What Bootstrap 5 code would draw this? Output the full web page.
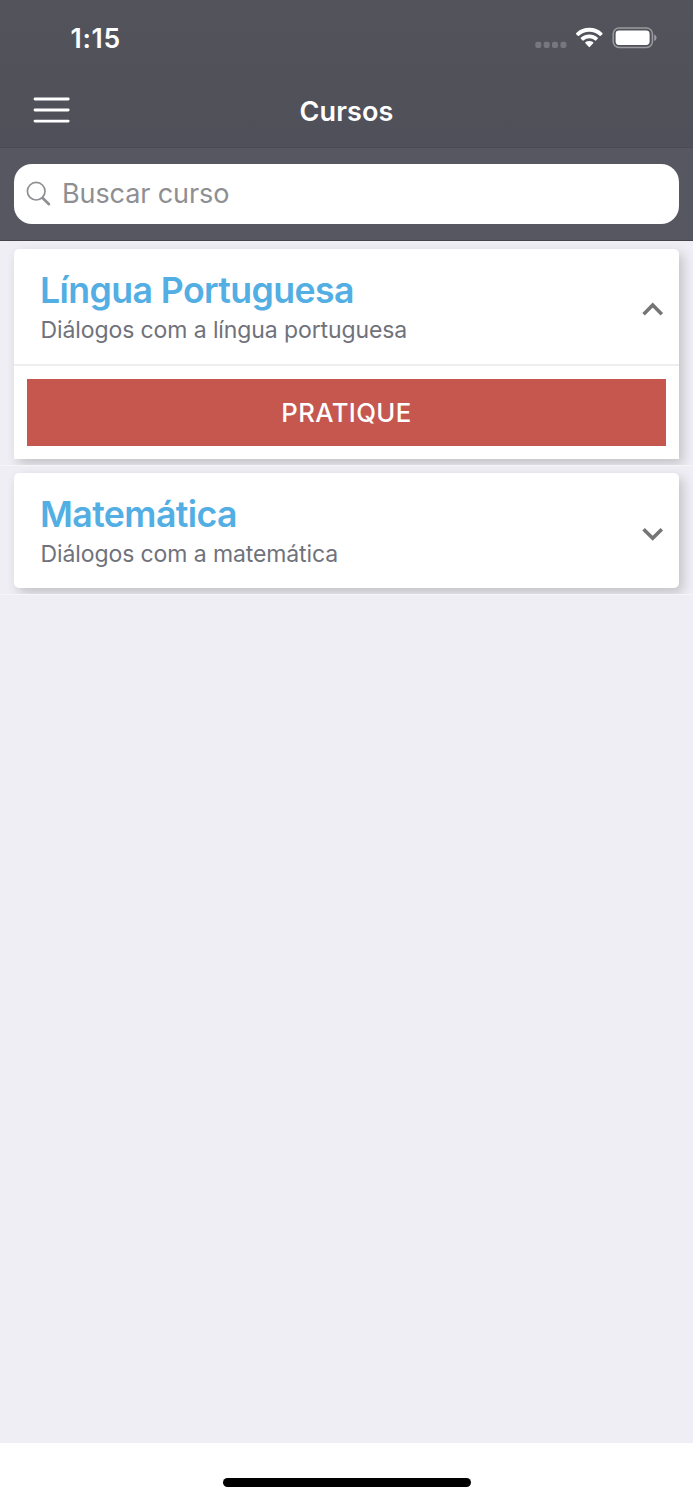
<!DOCTYPE html>
<html lang="pt-BR">
<head>
<meta charset="utf-8">
<meta name="viewport" content="width=device-width, initial-scale=1">
<title>Cursos</title>
<link href="https://cdn.jsdelivr.net/npm/bootstrap@5.3.0/dist/css/bootstrap.min.css" rel="stylesheet">
<style>
body{font-family:Inter,Roboto,"Liberation Sans",sans-serif;background:#efeef4;height:1500px;overflow:hidden}
svg{display:block;flex:none}
.topbar{height:148px;background:linear-gradient(#53535b,#50505a);border-bottom:1px solid #4b4a54;color:#fff}
.statusbar{height:76px;padding:0 36px 0 70.5px}
.clock{font-size:26.5px;font-weight:600;line-height:76px;letter-spacing:.7px}
.titlebar{height:68px;padding-left:33px}
.page-title{font-size:27px;font-weight:600;line-height:70px;letter-spacing:.1px;padding-top:3px}
.searchbar{height:93px;padding:16px 14px;background:#575762;border-bottom:1px solid #45434e}
.search-field{height:60px;border-radius:18px;padding-left:11px}
.search-field input{font-size:27px;font-weight:400;letter-spacing:-.1px;padding:0 0 2px;height:60px;margin-left:1px}
.search-field input::placeholder{color:#8e8e93;opacity:1}
.course-row{overflow:hidden;padding:8px 14px 6px;border-bottom:1px solid #f6f6f9}
.course-row+.course-row{padding-top:7px}
.course{border:0;border-radius:5px;box-shadow:4px 5px 12px rgba(0,0,0,.19)}
.course.opened{border-radius:5px 5px 0 0}
.course-head{height:115px;padding:19px 15px 0 26.5px}
.course-name{font-size:35.7px;font-weight:600;line-height:44px;color:#52aee3;letter-spacing:-.6px;margin-left:-.5px!important}
.course-info{font-size:23px;line-height:34px;color:#70727b;letter-spacing:-.1px;padding-top:1px}
.course-head svg{margin-top:24px}
.course-body{border-top:2px solid #eeeef1;padding:13px}
.practice{height:67px;border-radius:0;background:#c5574f;color:#fff;font-size:25.7px;font-weight:500;line-height:67px;padding:0;border:0;letter-spacing:.4px}
.home-area{height:57px;padding-top:35px}
.home-pill{width:248px;height:8.5px;background:#000}
</style>
</head>
<body class="d-flex flex-column">
<header>
  <div class="topbar">
    <div class="statusbar d-flex justify-content-between">
      <span class="clock">1:15</span>
      <svg width="124" height="76" viewBox="533 0 124 76">
        <g fill="#77777f"><rect x="535.3" y="41.7" width="6" height="6.2" rx="2"/><rect x="543.7" y="41.7" width="6" height="6.2" rx="2"/><rect x="552" y="41.7" width="6" height="6.2" rx="2"/><rect x="560.4" y="41.7" width="6" height="6.2" rx="2"/></g>
        <path fill="#fff" d="M576.2 34.2 Q575.6 33.5 576.3 32.9 Q581.8 27.8 589.3 27.8 Q596.8 27.8 602.3 32.9 Q603 33.5 602.4 34.2 L600.8 35.8 Q600.2 36.3 599.6 35.8 Q595.2 31.8 589.3 31.8 Q583.4 31.8 579 35.8 Q578.4 36.3 577.8 35.8 Z M580.9 38.7 Q580.3 38.1 581 37.5 Q584.5 34.4 589.3 34.4 Q594.1 34.4 597.6 37.5 Q598.3 38.1 597.7 38.7 L596 40.4 Q595.5 40.9 594.8 40.3 Q592.5 38.3 589.3 38.3 Q586.1 38.3 583.8 40.3 Q583.1 40.9 582.6 40.4 Z M585.4 43.2 Q584.9 42.6 585.6 42.1 Q587.2 41 589.3 41 Q591.4 41 593 42.1 Q593.7 42.6 593.2 43.2 L589.9 46.8 Q589.3 47.5 588.7 46.8 Z"/>
        <rect x="613.2" y="28" width="39.2" height="19.4" rx="5.8" fill="none" stroke="#9a9aa0" stroke-width="1.5"/>
        <rect x="615.6" y="30.5" width="34" height="14.5" rx="3.4" fill="#fff"/>
        <path d="M654.2 34.5q2.4.9 2.4 3.3t-2.4 3.3z" fill="#9a9aa0"/>
      </svg>
    </div>
    <div class="titlebar position-relative d-flex align-items-center">
      <svg width="38" height="32" viewBox="33 94 38 32" stroke="#fff" stroke-width="2.8" stroke-linecap="round"><path d="M35 99h33.2M35 110h33.2M35 121.1h33.2"/></svg>
      <h1 class="page-title position-absolute start-0 end-0 text-center m-0">Cursos</h1>
    </div>
  </div>
  <div class="searchbar">
    <div class="search-field bg-white d-flex align-items-center gap-2">
      <svg width="28" height="28" viewBox="25 180 28 28" fill="none" stroke="#8e8e93"><circle cx="36.2" cy="191.2" r="8.8" stroke-width="1.7"/><path d="M42.6 198l6.4 6.2" stroke-width="2.6" stroke-linecap="round"/></svg>
      <input class="form-control border-0 shadow-none bg-transparent" type="text" placeholder="Buscar curso" aria-label="Buscar curso">
    </div>
  </div>
</header>
<main class="flex-grow-1">
  <section class="course-row">
    <div class="course opened bg-white">
      <div class="course-head d-flex justify-content-between">
        <div><h2 class="course-name m-0">Língua Portuguesa</h2><div class="course-info">Diálogos com a língua portuguesa</div></div>
        <svg width="22" height="34" viewBox="642 292.5 22 34" fill="none" stroke="#757575" stroke-width="3.6"><path d="M643.6 314.7l9.1-9.1 9.1 9.1"/></svg>
      </div>
      <div class="course-body"><button class="practice btn w-100 d-block">PRATIQUE</button></div>
    </div>
  </section>
  <section class="course-row">
    <div class="course bg-white">
      <div class="course-head d-flex justify-content-between">
        <div><h2 class="course-name m-0">Matemática</h2><div class="course-info">Diálogos com a matemática</div></div>
        <svg width="22" height="34" viewBox="642 516 22 34" fill="none" stroke="#757575" stroke-width="3.6"><path d="M643.6 529.2l9.1 9.1 9.1-9.1"/></svg>
      </div>
    </div>
  </section>
</main>
<footer class="home-area bg-white"><div class="home-pill rounded-pill mx-auto"></div></footer>
<script src="https://cdn.jsdelivr.net/npm/bootstrap@5.3.0/dist/js/bootstrap.bundle.min.js"></script>
</body>
</html>
